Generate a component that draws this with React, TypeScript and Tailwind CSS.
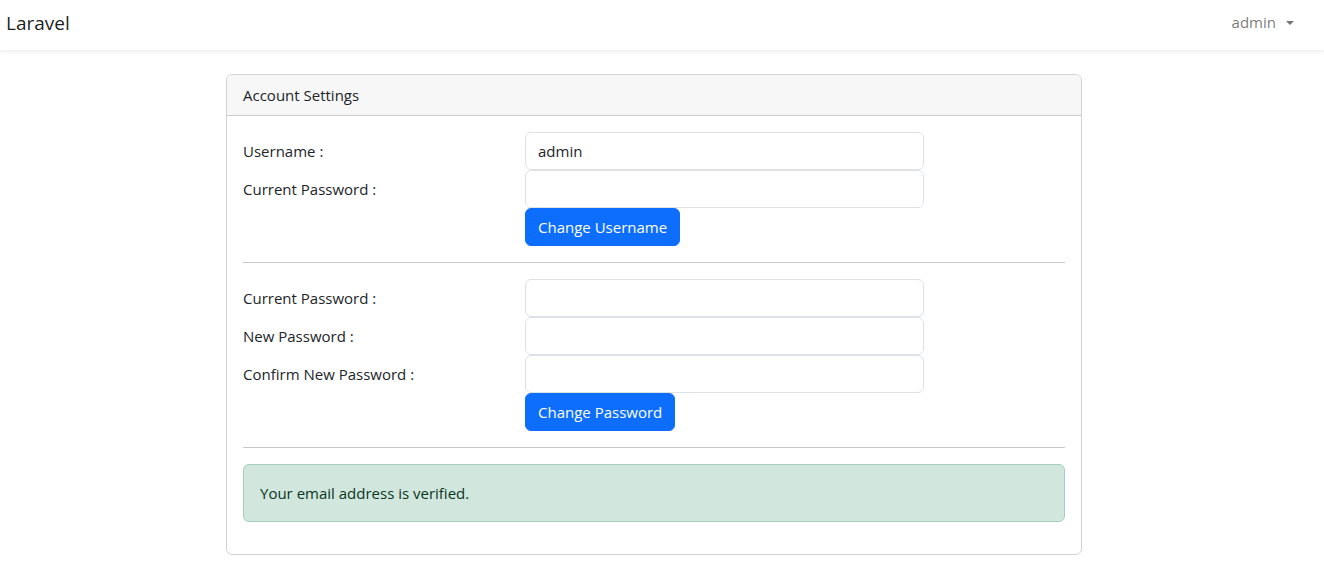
import React from 'react';

const font = { fontFamily: '"Open Sans", "Noto Sans", sans-serif' };

const Field: React.FC<{ label: string; value?: string; type?: string }> = ({ label, value, type = 'text' }) => (
  <div className="flex">
    <label className="w-[282px] shrink-0 pl-3 pt-[7px] pb-[7px] leading-6">{label}</label>
    <div className="px-3">
      <input
        type={type}
        defaultValue={value}
        className="block w-[399px] h-[38px] px-3 py-[6px] border border-[#dee2e6] rounded-[6px] text-[15px] text-[#212529] bg-white outline-none"
      />
    </div>
  </div>
);

const SubmitRow: React.FC<{ label: string }> = ({ label }) => (
  <div className="flex">
    <div className="w-[282px] shrink-0" />
    <div className="px-3">
      <button className="h-[38px] px-3 rounded-[6px] bg-[#0d6efd] text-white text-[15px] leading-6 border border-[#0d6efd]">
        {label}
      </button>
    </div>
  </div>
);

export default function App() {
  return (
    <div className="min-h-[566px] bg-white text-[#212529] text-[15px] leading-6" style={font}>
      <nav className="h-[50px] bg-white shadow-[0_2px_4px_rgba(0,0,0,0.075)] flex items-center justify-between pl-[6px] pr-[30px]">
        <span className="text-[19px] leading-[30px] text-[rgba(0,0,0,0.9)] -mt-[5px]">Laravel</span>
        <span className="flex items-center text-[rgba(0,0,0,0.55)] -mt-[6px]">
          admin
          <span className="ml-[10px] mt-[1px] w-0 h-0 border-t-[4px] border-t-[rgba(0,0,0,0.55)] border-x-[4px] border-x-transparent" />
        </span>
      </nav>

      <main className="pt-6">
        <div className="ml-[226px] w-[856px] border border-[rgba(0,0,0,0.175)] rounded-[6px] overflow-hidden">
          <div className="px-4 py-2 bg-[#f7f7f7] border-b border-[rgba(0,0,0,0.175)]">Account Settings</div>
          <div className="p-4">
            <div className="-mx-3">
              <Field label="Username :" value="admin" />
              <Field label="Current Password :" type="password" />
              <SubmitRow label="Change Username" />
            </div>
            <hr className="my-4 border-t border-[#c8c9ca]" />
            <div className="-mx-3">
              <Field label="Current Password :" type="password" />
              <Field label="New Password :" type="password" />
              <Field label="Confirm New Password :" type="password" />
              <SubmitRow label="Change Password" />
            </div>
            <hr className="my-4 border-t border-[#c8c9ca]" />
            <div className="mb-4 p-4 bg-[#d1e7dd] border border-[#a3cfbb] text-[#0a3622] rounded-[6px]">
              Your email address is verified.
            </div>
          </div>
        </div>
      </main>
    </div>
  );
}
